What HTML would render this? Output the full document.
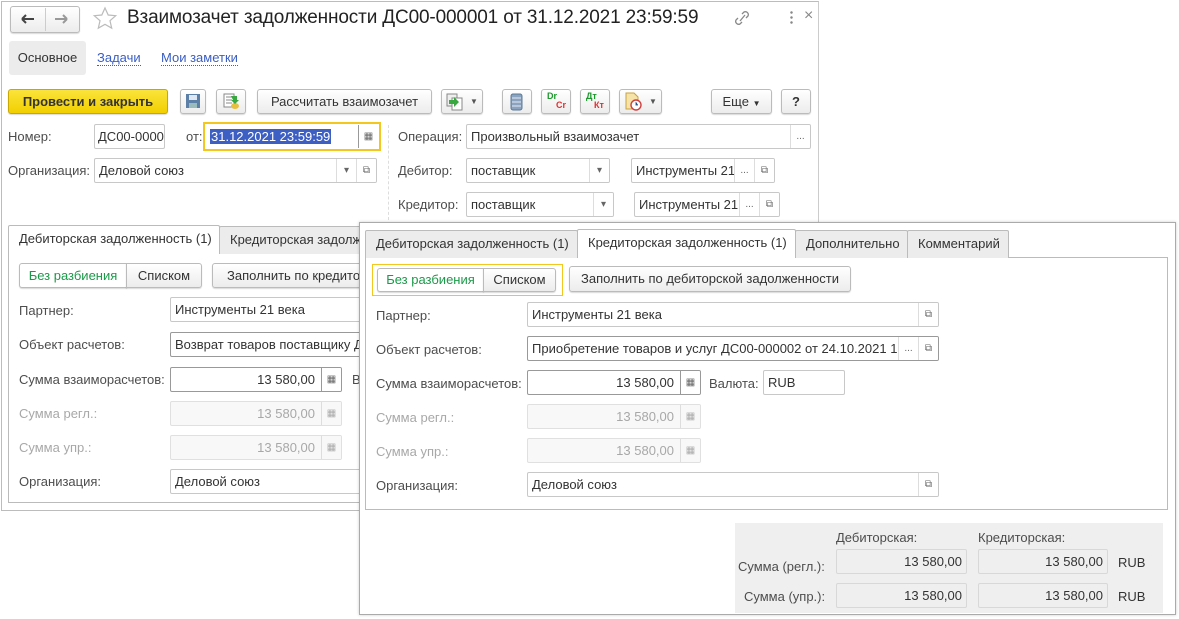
<!DOCTYPE html>
<html><head><meta charset="utf-8"><style>
*{box-sizing:border-box;margin:0;padding:0}
body{width:1179px;height:619px;background:#fff;font-family:"Liberation Sans",Arial,sans-serif;font-size:13px;color:#333;position:relative;overflow:hidden}
.a{position:absolute}
.btn{position:absolute;border:1px solid #bbb;border-radius:3px;background:linear-gradient(#fff,#ececec);box-shadow:0 1px 1px rgba(0,0,0,.15);text-align:center;color:#333}
.inp{position:absolute;border:1px solid #c8c8c8;border-radius:2px;background:#fff;height:25px;line-height:23px;padding-left:4px;white-space:nowrap;overflow:hidden;color:#333}
.lbl{position:absolute;color:#4d4d4d;white-space:nowrap}
.dis{color:#a8a8a8}
.sb{position:absolute;top:0;bottom:0;border-left:1px solid #ddd;width:20px;text-align:center;color:#666;font-size:10px;line-height:23px;background:#fff}
.num{text-align:right;padding-right:26px}
.tab{position:absolute;border:1px solid #bbb;border-bottom:none;background:#ececec;height:28px;line-height:26px;padding:0 10px;white-space:nowrap;color:#333;border-radius:2px 2px 0 0}
.tab.on{background:#fff;height:29px}
</style></head><body>
<div class="a" style="left:1px;top:1px;width:818px;height:510px;border:1px solid #bcbcbc;border-right-color:#ccc"></div>
<div class="btn" style="left:10px;top:6px;width:70px;height:27px;"></div>
<div class="a" style="left:45px;top:8px;width:1px;height:23px;background:#ccc"></div>
<svg class="a" style="left:19px;top:12px" width="18" height="14"><path d="M3 7h12M3 7l4-4M3 7l4 4" stroke="#444" stroke-width="2" fill="none"/></svg>
<svg class="a" style="left:53px;top:12px" width="18" height="14"><path d="M2 7h12M14 7l-4-4M14 7l-4 4" stroke="#999" stroke-width="2" fill="none"/></svg>
<svg class="a" style="left:92px;top:6px" width="26" height="26"><path d="M13 2l3.2 7 7.5.7-5.7 5 1.7 7.5L13 18.3 6.3 22.2 8 14.7l-5.7-5L9.8 9z" fill="none" stroke="#bbb" stroke-width="1.2"/></svg>
<div class="a" style="left:127px;top:7px;font-size:19px;color:#222;white-space:nowrap;letter-spacing:-0.15px">Взаимозачет задолженности ДС00-000001 от 31.12.2021 23:59:59</div>
<svg class="a" style="left:733px;top:9px" width="18" height="18"><path d="M7 12l5-6M9 5l2-2a3 3 0 0 1 4 4l-2 2M9 13l-2 2a3 3 0 0 1-4-4l2-2" stroke="#888" stroke-width="1.3" fill="none"/></svg>
<div class="a" style="left:790px;top:10px;width:3px;height:14px;background:radial-gradient(circle,#888 1px,transparent 1.5px) 0 0/3px 5px"></div>
<div class="a" style="left:804px;top:7px;color:#888;font-size:16px">×</div>
<div class="a" style="left:9px;top:41px;width:77px;height:34px;background:#ececec;border-radius:3px;line-height:34px;text-align:center;color:#333">Основное</div>
<div class="a" style="left:97px;top:50px;color:#3a5ec4;border-bottom:1px dotted #3a5ec4;line-height:15px">Задачи</div>
<div class="a" style="left:161px;top:50px;color:#3a5ec4;border-bottom:1px dotted #3a5ec4;line-height:15px">Мои заметки</div>
<div class="btn" style="left:8px;top:89px;width:160px;height:25px;line-height:23px;background:linear-gradient(#fbe43a,#f1cf00);border-color:#c9a800;font-weight:bold;color:#333;font-size:13px">Провести и закрыть</div>
<div class="btn" style="left:180px;top:89px;width:26px;height:25px"></div>
<svg class="a" style="left:185px;top:93px" width="16" height="16"><rect x="1" y="1" width="14" height="14" fill="#5b7fa6"/><rect x="4" y="2" width="8" height="5" fill="#dfe8f2"/><rect x="4" y="10" width="8" height="5" fill="#9bb"/></svg>
<div class="btn" style="left:216px;top:89px;width:30px;height:25px"></div>
<svg class="a" style="left:222px;top:92px" width="18" height="18"><rect x="2" y="2" width="10" height="13" fill="#fff" stroke="#888"/><path d="M4 5h6M4 8h6M4 11h6" stroke="#888"/><ellipse cx="13" cy="14" rx="4" ry="3" fill="#e8c040"/><path d="M9 4h6v4l2 0-4 4-4-4h2" fill="#3aa840"/></svg>
<div class="btn" style="left:257px;top:89px;width:175px;height:25px;line-height:23px">Рассчитать взаимозачет</div>
<div class="btn" style="left:441px;top:89px;width:42px;height:25px"></div>
<svg class="a" style="left:446px;top:93px" width="18" height="18"><rect x="1" y="1" width="10" height="12" fill="#eee" stroke="#888"/><rect x="6" y="5" width="10" height="12" fill="#fff" stroke="#888"/><path d="M3 7h5v-3l5 5-5 5v-3H3z" fill="#3aa840"/></svg>
<div class="a" style="left:470px;top:97px;font-size:8px;color:#555">▼</div>
<div class="btn" style="left:502px;top:89px;width:30px;height:25px"></div>
<svg class="a" style="left:510px;top:93px" width="14" height="18"><rect x="1" y="1" width="11" height="16" rx="2" fill="#8aa3c0" stroke="#5b7896"/><path d="M2 5h9M2 9h9M2 13h9" stroke="#e5ecf4"/></svg>
<div class="btn" style="left:541px;top:89px;width:30px;height:25px"></div>
<div class="a" style="left:547px;top:91px;font-size:9px;font-weight:bold;color:#1a9a2a">Dr</div>
<div class="a" style="left:556px;top:100px;font-size:9px;font-weight:bold;color:#e03030">Cr</div>
<div class="btn" style="left:580px;top:89px;width:30px;height:25px"></div>
<div class="a" style="left:586px;top:91px;font-size:9px;font-weight:bold;color:#1a9a2a">Дт</div>
<div class="a" style="left:594px;top:100px;font-size:9px;font-weight:bold;color:#e03030">Кт</div>
<div class="btn" style="left:619px;top:89px;width:43px;height:25px"></div>
<svg class="a" style="left:624px;top:92px" width="20" height="19"><path d="M2 1h8l4 4v12H2z" fill="#f5e3a8" stroke="#c9a040"/><circle cx="12" cy="13" r="5" fill="#fff" stroke="#d04040" stroke-width="1.4"/><path d="M12 10v3h2" stroke="#3a6fb0"/></svg>
<div class="a" style="left:649px;top:97px;font-size:8px;color:#555">▼</div>
<div class="btn" style="left:711px;top:89px;width:61px;height:25px;line-height:23px">Еще <span style="font-size:8px">▼</span></div>
<div class="btn" style="left:781px;top:89px;width:30px;height:25px;line-height:23px;font-weight:bold">?</div>
<div class="lbl" style="left:8px;top:129px">Номер:</div>
<div class="inp" style="left:94px;top:124px;width:71px;padding-left:3px">ДС00-0000</div>
<div class="lbl" style="left:186px;top:129px">от:</div>
<div class="a" style="left:203px;top:122px;width:178px;height:29px;border:2px solid #f3c71e"></div>
<div class="inp" style="left:205px;top:124px;width:174px;border-color:#fff"><span style="background:#3d5fc4;color:#fff;padding:0 1px">31.12.2021 23:59:59</span><div class="sb" style="right:0;border-left-color:#999">▦</div></div>
<div class="lbl" style="left:8px;top:163px">Организация:</div>
<div class="inp" style="left:94px;top:158px;width:283px">Деловой союз<div class="sb" style="right:20px">▾</div><div class="sb" style="right:0">⧉</div></div>
<div class="a" style="left:388px;top:125px;height:95px;border-left:1px dashed #ddd"></div>
<div class="lbl" style="left:398px;top:129px">Операция:</div>
<div class="inp" style="left:466px;top:124px;width:345px">Произвольный взаимозачет<div class="sb" style="right:0">...</div></div>
<div class="lbl" style="left:398px;top:163px">Дебитор:</div>
<div class="inp" style="left:466px;top:158px;width:144px">поставщик<div class="sb" style="right:0">▾</div></div>
<div class="inp" style="left:631px;top:158px;width:144px">Инструменты 21<div class="sb" style="right:20px">...</div><div class="sb" style="right:0">⧉</div></div>
<div class="lbl" style="left:398px;top:197px">Кредитор:</div>
<div class="inp" style="left:466px;top:192px;width:148px">поставщик<div class="sb" style="right:0">▾</div></div>
<div class="inp" style="left:634px;top:192px;width:146px">Инструменты 21<div class="sb" style="right:20px">...</div><div class="sb" style="right:0">⧉</div></div>
<div class="a" style="left:8px;top:253px;width:360px;height:250px;border:1px solid #bbb"></div>
<div class="tab on" style="left:8px;top:225px;width:212px">Дебиторская задолженность (1)</div>
<div class="tab" style="left:219px;top:226px;width:160px">Кредиторская задолженность (1)</div>
<div class="btn" style="left:19px;top:263px;width:108px;height:25px;line-height:23px;color:#1a9a48;background:#fff;border-radius:3px 0 0 3px">Без разбиения</div>
<div class="btn" style="left:126px;top:263px;width:76px;height:25px;line-height:23px;border-radius:0 3px 3px 0">Списком</div>
<div class="btn" style="left:212px;top:263px;width:170px;height:25px;line-height:23px;text-align:left;padding-left:14px;white-space:nowrap;overflow:hidden">Заполнить по кредиторской</div>
<div class="lbl" style="left:19px;top:303px">Партнер:</div>
<div class="inp" style="left:170px;top:297px;width:200px">Инструменты 21 века</div>
<div class="lbl" style="left:19px;top:337px">Объект расчетов:</div>
<div class="inp" style="left:170px;top:332px;width:200px;border-color:#999">Возврат товаров поставщику Д</div>
<div class="lbl" style="left:19px;top:372px">Сумма взаиморасчетов:</div>
<div class="inp num" style="left:170px;top:367px;width:172px;border-color:#999">13 580,00<div class="sb" style="right:0;border-left-color:#999">▦</div></div>
<div class="lbl" style="left:352px;top:372px">В</div>
<div class="lbl dis" style="left:19px;top:406px">Сумма регл.:</div>
<div class="inp num dis" style="left:170px;top:401px;width:172px;background:#f8f8f8;border-color:#e0e0e0">13 580,00<div class="sb" style="right:0;background:#f8f8f8;color:#aaa">▦</div></div>
<div class="lbl dis" style="left:19px;top:440px">Сумма упр.:</div>
<div class="inp num dis" style="left:170px;top:435px;width:172px;background:#f8f8f8;border-color:#e0e0e0">13 580,00<div class="sb" style="right:0;background:#f8f8f8;color:#aaa">▦</div></div>
<div class="lbl" style="left:19px;top:474px">Организация:</div>
<div class="inp" style="left:170px;top:469px;width:200px">Деловой союз</div>
<div class="a" style="left:359px;top:222px;width:817px;height:393px;background:#fff;border:1px solid #aaa;box-shadow:0 0 3px rgba(0,0,0,.2)"></div>
<div class="a" style="left:365px;top:257px;width:803px;height:253px;border:1px solid #bbb"></div>
<div class="tab" style="left:365px;top:230px;width:213px">Дебиторская задолженность (1)</div>
<div class="tab on" style="left:577px;top:229px;width:219px">Кредиторская задолженность (1)</div>
<div class="tab" style="left:795px;top:230px;width:113px">Дополнительно</div>
<div class="tab" style="left:907px;top:230px;width:102px">Комментарий</div>
<div class="a" style="left:372px;top:264px;width:191px;height:32px;border:1px solid #f3c71e"></div>
<div class="btn" style="left:377px;top:268px;width:107px;height:24px;line-height:22px;color:#1a9a48;background:#fff;border-radius:3px 0 0 3px">Без разбиения</div>
<div class="btn" style="left:483px;top:268px;width:73px;height:24px;line-height:22px;border-radius:0 3px 3px 0">Списком</div>
<div class="btn" style="left:569px;top:266px;width:282px;height:26px;line-height:24px">Заполнить по дебиторской задолженности</div>
<div class="lbl" style="left:376px;top:308px">Партнер:</div>
<div class="inp" style="left:527px;top:302px;width:412px">Инструменты 21 века<div class="sb" style="right:0">⧉</div></div>
<div class="lbl" style="left:376px;top:342px">Объект расчетов:</div>
<div class="inp" style="left:527px;top:336px;width:412px;border-color:#999">Приобретение товаров и услуг ДС00-000002 от 24.10.2021 1<div class="sb" style="right:20px">...</div><div class="sb" style="right:0">⧉</div></div>
<div class="lbl" style="left:376px;top:376px">Сумма взаиморасчетов:</div>
<div class="inp num" style="left:527px;top:370px;width:174px;border-color:#999">13 580,00<div class="sb" style="right:0;border-left-color:#999">▦</div></div>
<div class="lbl" style="left:709px;top:376px">Валюта:</div>
<div class="inp" style="left:763px;top:370px;width:82px">RUB</div>
<div class="lbl dis" style="left:376px;top:410px">Сумма регл.:</div>
<div class="inp num dis" style="left:527px;top:404px;width:174px;background:#f8f8f8;border-color:#e0e0e0">13 580,00<div class="sb" style="right:0;background:#f8f8f8;color:#aaa">▦</div></div>
<div class="lbl dis" style="left:376px;top:444px">Сумма упр.:</div>
<div class="inp num dis" style="left:527px;top:438px;width:174px;background:#f8f8f8;border-color:#e0e0e0">13 580,00<div class="sb" style="right:0;background:#f8f8f8;color:#aaa">▦</div></div>
<div class="lbl" style="left:376px;top:478px">Организация:</div>
<div class="inp" style="left:527px;top:472px;width:412px">Деловой союз<div class="sb" style="right:0">⧉</div></div>
<div class="a" style="left:735px;top:523px;width:428px;height:90px;background:#efefef"></div>
<div class="lbl" style="left:836px;top:530px">Дебиторская:</div>
<div class="lbl" style="left:978px;top:530px">Кредиторская:</div>
<div class="lbl" style="left:738px;top:559px">Сумма (регл.):</div>
<div class="inp" style="left:836px;top:549px;width:131px;background:#efefef;border-color:#d8d8d8;text-align:right;padding-right:4px">13 580,00</div>
<div class="inp" style="left:978px;top:549px;width:130px;background:#efefef;border-color:#d8d8d8;text-align:right;padding-right:4px">13 580,00</div>
<div class="lbl" style="left:1118px;top:555px;color:#333">RUB</div>
<div class="lbl" style="left:744px;top:589px">Сумма (упр.):</div>
<div class="inp" style="left:836px;top:583px;width:131px;background:#efefef;border-color:#d8d8d8;text-align:right;padding-right:4px">13 580,00</div>
<div class="inp" style="left:978px;top:583px;width:130px;background:#efefef;border-color:#d8d8d8;text-align:right;padding-right:4px">13 580,00</div>
<div class="lbl" style="left:1118px;top:589px;color:#333">RUB</div>
</body></html>
